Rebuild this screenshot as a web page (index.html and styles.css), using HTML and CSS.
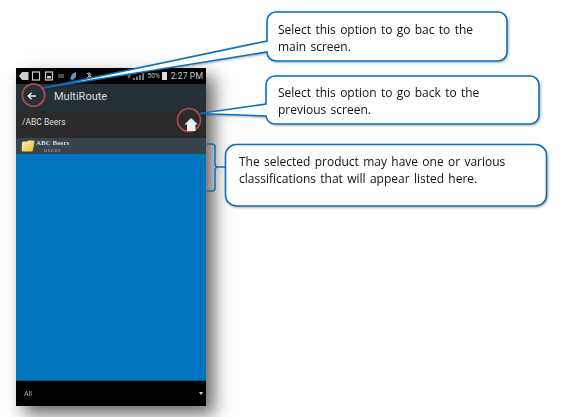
FILE: index.html
```html
<!DOCTYPE html>
<html lang="en">
<head>
  <meta charset="UTF-8" />
  <title>MultiRoute help</title>
  <link rel="stylesheet" href="styles.css">
</head>
<body>
<div class="page">
  <div class="phone">
    <div class="status">
      <svg class="status-icons" width="82" height="10" viewBox="0 0 82 10">
        <path d="M0 5 L3 1 H9.5 V9 H3 Z" fill="#ccc"/>
        <rect x="13.5" y="1" width="7" height="8" fill="none" stroke="#ccc" stroke-width="1.2"/>
        <rect x="26.5" y="1" width="7" height="8" fill="none" stroke="#ccc" stroke-width="1.2"/>
        <rect x="28" y="5" width="4" height="2.5" fill="#ccc"/>
        <path d="M39 4 H45 M45 6 H39" stroke="#999" stroke-width="1.1"/>
        <path d="M51 8 L53 3 L57 1 L57 6 L54 9 Z" fill="#6b8fb5"/>
        <path d="M68 2 L72 6 L70 8 V1.5 L72 3.5 L68 7" fill="none" stroke="#ccc" stroke-width=".9"/>
      </svg>
      <div class="status-right">
        <svg width="19" height="8" viewBox="0 0 19 8">
          <path d="M0 3 H4 L2 7 Z" fill="#777"/>
          <path d="M7 8 V6 M10 8 V4.5 M13 8 V3 M16 8 V1" stroke="#999" stroke-width="1.6"/>
        </svg>
        <span class="battery-text">50%</span>
        <span class="battery"></span>
        <span class="clock">2:27 PM</span>
      </div>
    </div>
    <div class="toolbar">
      <svg class="back" width="9" height="8" viewBox="0 0 9 8">
        <path d="M9 4 H1.5 M4.5 .8 L1.3 4 L4.5 7.2" fill="none" stroke="#eee" stroke-width="1.4"/>
      </svg>
      <span class="title">MultiRoute</span>
    </div>
    <div class="crumb">/ABC Beers</div>
    <div class="row">
      <svg width="14" height="12" viewBox="0 0 14 12">
        <defs>
          <linearGradient id="folder" x1="0" y1="0" x2="1" y2="1">
            <stop offset="0" stop-color="#fff2a8"/>
            <stop offset="1" stop-color="#eab92c"/>
          </linearGradient>
        </defs>
        <path d="M1 3 Q1 1.5 2.5 1.5 H6 L7.5 0.5 H12.5 Q13.5 .5 13.5 2 L12 10 Q11.8 11.5 10 11.5 H2 Q.5 11.5 .7 10 Z" fill="url(#folder)"/>
      </svg>
      <div class="row-text">
        <div class="row-name">ABC Beers</div>
        <div class="row-sub">BEERS</div>
      </div>
    </div>
    <div class="list"></div>
    <div class="footer">
      <span class="footer-label">All</span>
      <span class="footer-arrow"></span>
    </div>
  </div>

  <svg class="marks" width="564" height="417" viewBox="0 0 564 417">
    <g class="outlines">
      <path d="M276 12 H498 a9 9 0 0 1 9 9 V52 a9 9 0 0 1 -9 9 H276 a9 9 0 0 1 -9 -9 L43 88 L267 41 V21 a9 9 0 0 1 9 -9 Z"/>
      <path d="M275 76 H530 a9 9 0 0 1 9 9 V115 a9 9 0 0 1 -9 9 H275 a9 9 0 0 1 -9 -8 L200 113.5 L266 104 V85 a9 9 0 0 1 9 -9 Z"/>
      <rect x="225.5" y="144.5" width="321" height="61.5" rx="11"/>
    </g>
    <path class="brace" d="M207 144 H212 Q215 144 215 147 V164 Q215 167 218 167 H225 M218 167 Q215 167 215 170 V188 Q215 191 212 191 H207"/>
    <circle class="ring" cx="33.5" cy="95" r="11.2"/>
    <circle class="ring" cx="189" cy="120" r="11.5"/>
    <path class="up" d="M191 118 L198 124.5 H195.5 V131 H187 V124.5 H184.5 Z"/>
  </svg>

  <p class="note note-main">Select this option to go bac to the<br>main screen.</p>
  <p class="note note-prev">Select this option to go back to the<br>previous screen.</p>
  <p class="note note-list">The selected product may have one or various<br>classifications that will appear listed here.</p>
</div>
</body>
</html>
```

FILE: styles.css
```css
* { box-sizing: border-box; }
body {
  margin: 0;
  background: #fff;
  font-family: 'Roboto', sans-serif;
}
.page {
  position: relative;
  width: 564px;
  height: 417px;
  overflow: hidden;
  padding: 68px 0 0 16px;
}
.phone {
  width: 190px;
  height: 338px;
  display: flex;
  flex-direction: column;
  background: #0075bd;
  box-shadow: 8px 8px 16px rgba(0,0,0,0.6);
  filter: blur(0.3px);
}
.status {
  height: 16px;
  background: #000;
  display: flex;
  justify-content: space-between;
  align-items: center;
  padding: 0 3px;
  color: #ccc;
}
.status-right {
  display: flex;
  align-items: center;
  gap: 2px;
}
.battery-text { font-size: 6.5px; }
.battery {
  width: 5px;
  height: 8px;
  background: #ddd;
}
.clock {
  font-size: 8.6px;
  margin-left: 2px;
  letter-spacing: 0.1px;
}
.toolbar {
  height: 27px;
  background: #252f36;
  display: flex;
  align-items: center;
  padding: 0 0 3px 11px;
  color: #ddd;
}
.title {
  font-size: 11px;
  margin-left: 18px;
}
.crumb {
  height: 27px;
  background: #2b2b2b;
  color: #ddd;
  font-size: 8.5px;
  padding: 6px 0 0 6px;
}
.row {
  height: 16px;
  background: #36454d;
  display: flex;
  align-items: center;
  padding-left: 5px;
  gap: 1px;
}
.row-text {
  display: flex;
  flex-direction: column;
  align-items: center;
  font-family: 'Liberation Serif', serif;
  margin-top: 1px;
}
.row-name {
  font-size: 7px;
  line-height: 9px;
  font-weight: bold;
  color: #d8dcde;
}
.row-sub {
  font-size: 5px;
  line-height: 6px;
  letter-spacing: 0.3px;
  color: #9aa4a9;
}
.list {
  flex: 1;
  border-bottom: 1px solid #005a92;
}
.footer {
  height: 25px;
  background: #000;
  display: flex;
  justify-content: space-between;
  align-items: center;
  padding: 0 3px 0 8px;
}
.footer-label {
  font-size: 7px;
  color: #aaa;
}
.footer-arrow {
  border-left: 2.5px solid transparent;
  border-right: 2.5px solid transparent;
  border-top: 3px solid #ccc;
}
.marks {
  position: absolute;
  left: 0;
  top: 0;
}
.outlines {
  fill: #fff;
  stroke: #0a70bb;
  stroke-width: 1.6;
  filter: drop-shadow(1px 1px 1px rgba(0,0,0,0.3));
}
.brace {
  fill: none;
  stroke: #0a70bb;
  stroke-width: 1.5;
}
.ring {
  fill: none;
  stroke: #b5484a;
  stroke-width: 1.7;
}
.up { fill: #eee; }
.note {
  position: absolute;
  margin: 0;
  font-family: 'Open Sans', sans-serif;
  font-size: 12px;
  line-height: 17px;
  word-spacing: 1.2px;
  color: #111;
  white-space: nowrap;
}
.note-main { left: 278px; top: 21px; }
.note-prev { left: 278px; top: 84px; }
.note-list { left: 239px; top: 153px; }
```
